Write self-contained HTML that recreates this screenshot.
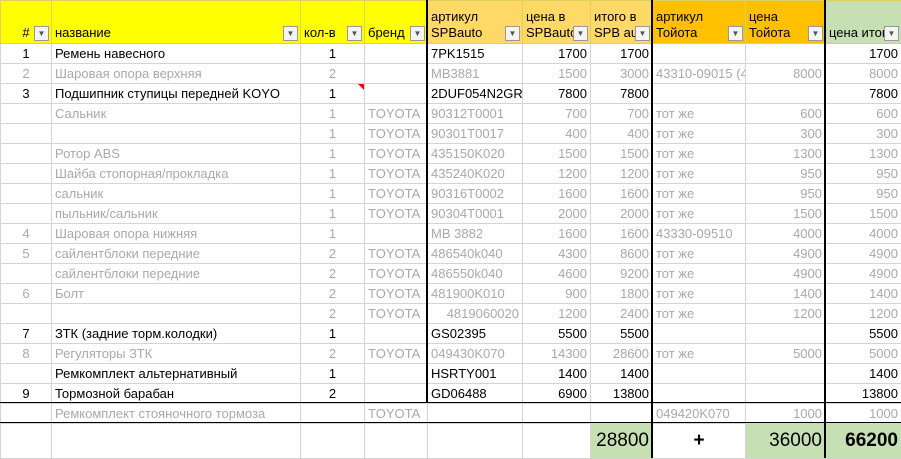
<!DOCTYPE html>
<html><head><meta charset="utf-8"><style>
body{margin:0;width:901px;height:458px;overflow:hidden;background:#fff;font-family:"Liberation Sans",sans-serif;font-size:13px;position:relative}
table{border-collapse:collapse;table-layout:fixed;position:absolute;left:0;top:0;width:901px}
td{border:1px solid #d4d4d4;height:19px;padding:0 3px;white-space:nowrap;overflow:hidden;line-height:19px;color:#000}
td.r{text-align:right}td.c{text-align:center}
tr.g td{color:#a9a9a9}
tr.h td{height:40px;vertical-align:bottom;line-height:16px;position:relative;padding-bottom:2px;border-color:#e0d060}
.y{background:#ffff00}.o{background:#ffd966}.oo{background:#ffc000}.gr{background:#c6e0b4}
.f{position:absolute;right:2px;bottom:2px;width:13px;height:13px;border:1px solid #999;background:#f4f4f4;font-size:8px;line-height:13px;text-align:center;color:#555}
tr.t td{height:34px;font-size:19px;line-height:34px}
.v{position:absolute;width:2px;background:#000}
.hl{position:absolute;height:1px;background:#000;left:0;width:901px}
</style></head><body>
<table>
<colgroup><col style="width:51px"><col style="width:249px"><col style="width:64px"><col style="width:63px"><col style="width:95px"><col style="width:68px"><col style="width:62px"><col style="width:93px"><col style="width:80px"><col style="width:76px"></colgroup>
<tr class="h"><td class="y c">#<span class="f">▼</span></td><td class="y">название<span class="f">▼</span></td><td class="y">кол-в<span class="f">▼</span></td><td class="y">бренд<span class="f">▼</span></td><td class="o">артикул<br>SPBauto<span class="f">▼</span></td><td class="o">цена в<br>SPBauto<span class="f">▼</span></td><td class="o">итого в<br>SPB auto<span class="f">▼</span></td><td class="oo">артикул<br>Тойота<span class="f">▼</span></td><td class="oo">цена<br>Тойота<span class="f">▼</span></td><td class="gr">цена итого<span class="f">▼</span></td></tr>
<tr><td class="c">1</td><td>Ремень навесного</td><td class="c">1</td><td></td><td>7PK1515</td><td class="r">1700</td><td class="r">1700</td><td></td><td></td><td class="r">1700</td></tr>
<tr class="g"><td class="c">2</td><td>Шаровая опора верхняя</td><td class="c">2</td><td></td><td>MB3881</td><td class="r">1500</td><td class="r">3000</td><td>43310-09015 (4</td><td class="r">8000</td><td class="r">8000</td></tr>
<tr><td class="c">3</td><td>Подшипник ступицы передней KOYO</td><td class="c" style="position:relative">1<span style="position:absolute;right:0;top:0;border-top:6px solid #e00;border-left:6px solid transparent"></span></td><td></td><td>2DUF054N2GR</td><td class="r">7800</td><td class="r">7800</td><td></td><td></td><td class="r">7800</td></tr>
<tr class="g"><td></td><td>Сальник</td><td class="c">1</td><td>TOYOTA</td><td>90312T0001</td><td class="r">700</td><td class="r">700</td><td>тот же</td><td class="r">600</td><td class="r">600</td></tr>
<tr class="g"><td></td><td></td><td class="c">1</td><td>TOYOTA</td><td>90301T0017</td><td class="r">400</td><td class="r">400</td><td>тот же</td><td class="r">300</td><td class="r">300</td></tr>
<tr class="g"><td></td><td>Ротор ABS</td><td class="c">1</td><td>TOYOTA</td><td>435150K020</td><td class="r">1500</td><td class="r">1500</td><td>тот же</td><td class="r">1300</td><td class="r">1300</td></tr>
<tr class="g"><td></td><td>Шайба стопорная/прокладка</td><td class="c">1</td><td>TOYOTA</td><td>435240K020</td><td class="r">1200</td><td class="r">1200</td><td>тот же</td><td class="r">950</td><td class="r">950</td></tr>
<tr class="g"><td></td><td>сальник</td><td class="c">1</td><td>TOYOTA</td><td>90316T0002</td><td class="r">1600</td><td class="r">1600</td><td>тот же</td><td class="r">950</td><td class="r">950</td></tr>
<tr class="g"><td></td><td>пыльник/сальник</td><td class="c">1</td><td>TOYOTA</td><td>90304T0001</td><td class="r">2000</td><td class="r">2000</td><td>тот же</td><td class="r">1500</td><td class="r">1500</td></tr>
<tr class="g"><td class="c">4</td><td>Шаровая опора нижняя</td><td class="c">1</td><td></td><td>MB 3882</td><td class="r">1600</td><td class="r">1600</td><td>43330-09510</td><td class="r">4000</td><td class="r">4000</td></tr>
<tr class="g"><td class="c">5</td><td>сайлентблоки передние</td><td class="c">2</td><td>TOYOTA</td><td>486540k040</td><td class="r">4300</td><td class="r">8600</td><td>тот же</td><td class="r">4900</td><td class="r">4900</td></tr>
<tr class="g"><td></td><td>сайлентблоки передние</td><td class="c">2</td><td>TOYOTA</td><td>486550k040</td><td class="r">4600</td><td class="r">9200</td><td>тот же</td><td class="r">4900</td><td class="r">4900</td></tr>
<tr class="g"><td class="c">6</td><td>Болт</td><td class="c">2</td><td>TOYOTA</td><td>481900K010</td><td class="r">900</td><td class="r">1800</td><td>тот же</td><td class="r">1400</td><td class="r">1400</td></tr>
<tr class="g"><td></td><td></td><td class="c">2</td><td>TOYOTA</td><td class="r">4819060020</td><td class="r">1200</td><td class="r">2400</td><td>тот же</td><td class="r">1200</td><td class="r">1200</td></tr>
<tr><td class="c">7</td><td>ЗТК (задние торм.колодки)</td><td class="c">1</td><td></td><td>GS02395</td><td class="r">5500</td><td class="r">5500</td><td></td><td></td><td class="r">5500</td></tr>
<tr class="g"><td class="c">8</td><td>Регуляторы ЗТК</td><td class="c">2</td><td>TOYOTA</td><td>049430K070</td><td class="r">14300</td><td class="r">28600</td><td>тот же</td><td class="r">5000</td><td class="r">5000</td></tr>
<tr><td></td><td>Ремкомплект альтернативный</td><td class="c">1</td><td></td><td>HSRTY001</td><td class="r">1400</td><td class="r">1400</td><td></td><td></td><td class="r">1400</td></tr>
<tr><td class="c">9</td><td>Тормозной барабан</td><td class="c">2</td><td></td><td>GD06488</td><td class="r">6900</td><td class="r">13800</td><td></td><td></td><td class="r">13800</td></tr>
<tr class="g"><td></td><td>Ремкомплект стояночного тормоза</td><td></td><td>TOYOTA</td><td></td><td></td><td></td><td>049420K070</td><td class="r">1000</td><td class="r">1000</td></tr>
<tr class="t"><td></td><td></td><td></td><td></td><td></td><td></td><td class="r gr">28800</td><td class="c" style="font-weight:bold">+</td><td class="r gr">36000</td><td class="r gr" style="font-weight:bold">66200</td></tr>
</table>
<div class="v" style="left:426px;top:0;height:403px"></div>
<div class="v" style="left:651px;top:0;height:458px"></div>
<div class="v" style="left:824px;top:0;height:458px"></div>
<div class="hl" style="top:402px"></div>
<div class="hl" style="top:422px"></div>
</body></html>
